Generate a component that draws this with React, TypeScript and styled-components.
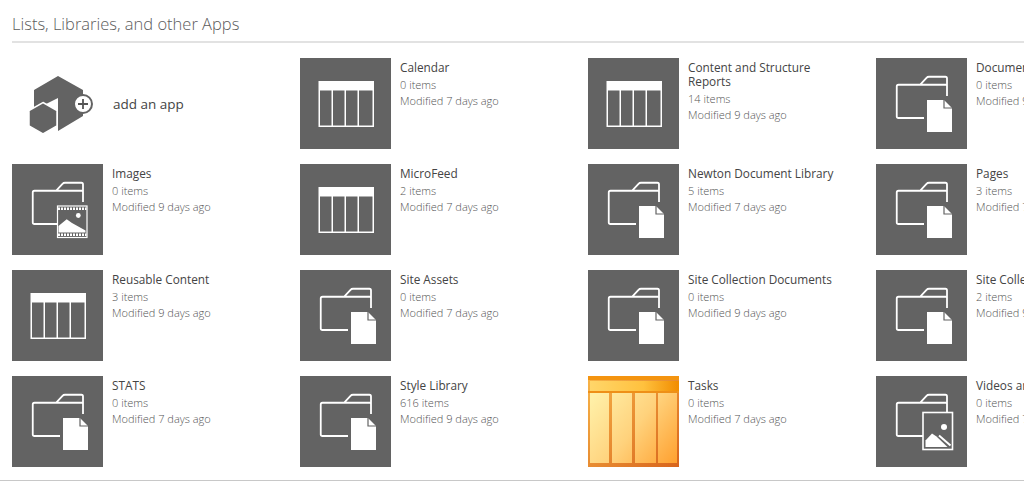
import React from 'react';
import styled, { createGlobalStyle } from 'styled-components';

type IconKind = 'table' | 'doc' | 'film' | 'picture' | 'tasks';

type AppItem = {
  name: string;
  count: number;
  days: number;
  icon: IconKind;
};

const APPS: AppItem[] = [
  { name: 'Calendar', count: 0, days: 7, icon: 'table' },
  { name: 'Content and Structure Reports', count: 14, days: 9, icon: 'table' },
  { name: 'Documents', count: 0, days: 9, icon: 'doc' },
  { name: 'Images', count: 0, days: 9, icon: 'film' },
  { name: 'MicroFeed', count: 2, days: 7, icon: 'table' },
  { name: 'Newton Document Library', count: 5, days: 7, icon: 'doc' },
  { name: 'Pages', count: 3, days: 7, icon: 'doc' },
  { name: 'Reusable Content', count: 3, days: 9, icon: 'table' },
  { name: 'Site Assets', count: 0, days: 7, icon: 'doc' },
  { name: 'Site Collection Documents', count: 0, days: 9, icon: 'doc' },
  { name: 'Site Collection Images', count: 2, days: 9, icon: 'doc' },
  { name: 'STATS', count: 0, days: 7, icon: 'doc' },
  { name: 'Style Library', count: 616, days: 9, icon: 'doc' },
  { name: 'Tasks', count: 0, days: 7, icon: 'tasks' },
  { name: 'Videos and Audio', count: 0, days: 7, icon: 'picture' },
];

const GlobalStyle = createGlobalStyle`
  html, body {
    margin: 0;
    padding: 0;
    background: #fff;
    overflow: hidden;
  }
`;

const Page = styled.div`
  width: 1024px;
  height: 481px;
  box-sizing: border-box;
  overflow: hidden;
  border-bottom: 1px solid #c8c8c8;
  font-family: "Open Sans", "Liberation Sans", sans-serif;
`;

const Heading = styled.h2`
  margin: 0 0 0 12px;
  height: 43px;
  box-sizing: border-box;
  padding-top: 13px;
  font-size: 16.5px;
  line-height: 22px;
  font-weight: 300;
  color: #5c5c5c;
  border-bottom: 2px solid #e2e2e2;
`;

const Grid = styled.div`
  display: grid;
  grid-template-columns: repeat(4, 273px);
  column-gap: 15px;
  row-gap: 15px;
  width: 1152px;
  padding: 15px 0 0 12px;
`;

const Card = styled.div`
  display: flex;
  gap: 9px;
  height: 91px;
`;

const Tile = styled.div<{ $plain?: boolean }>`
  flex: 0 0 91px;
  height: 91px;
  background: ${({ $plain }) => ($plain ? 'transparent' : '#636363')};

  svg {
    display: block;
  }
`;

const Info = styled.div`
  width: 160px;
  padding-top: 2px;
`;

const Name = styled.div`
  font-size: 11.8px;
  line-height: 14px;
  color: #444;
  margin-bottom: 3px;
`;

const Meta = styled.div`
  font-size: 11px;
  line-height: 16px;
  font-weight: 300;
  color: #555;
  white-space: nowrap;
`;

const AddLabel = styled.div`
  align-self: center;
  font-size: 13.5px;
  line-height: 18px;
  color: #444;
  margin: 1px 0 0 1px;
`;

const FolderShape = () => (
  <path
    d="M48 60H22.5Q20.75 60 20.75 58.5V28.5Q20.75 26.75 22.5 26.75H44L50.5 19.8Q51.5 18.75 53 18.75H69.5Q71 18.75 71 20.5V38M44 26.75H71"
    fill="none"
    stroke="#fff"
    strokeWidth="1.8"
  />
);

const TableIcon = () => (
  <svg width="91" height="91" viewBox="0 0 91 91">
    <rect x="18.5" y="23" width="55.5" height="46" fill="#fff" />
    <rect x="20" y="32.5" width="11.5" height="35" fill="#636363" />
    <rect x="33" y="32.5" width="11.5" height="35" fill="#636363" />
    <rect x="46" y="32.5" width="11.5" height="35" fill="#636363" />
    <rect x="59" y="32.5" width="13.5" height="35" fill="#636363" />
  </svg>
);

const DocIcon = () => (
  <svg width="91" height="91" viewBox="0 0 91 91">
    <FolderShape />
    <path d="M51 42H68L76 50V74H51Z" fill="#fff" />
    <path d="M68 41V50H77" fill="none" stroke="#636363" strokeWidth="1.2" />
  </svg>
);

const PictureIcon = () => (
  <svg width="91" height="91" viewBox="0 0 91 91">
    <FolderShape />
    <rect x="47" y="36.5" width="29.5" height="37" fill="#636363" stroke="#fff" strokeWidth="1.6" />
    <circle cx="68" cy="51" r="3" fill="#fff" />
    <path d="M49.5 71V64.5L56 57.5L60.5 60.5L71.5 71Z" fill="#fff" />
    <path d="M63 59.5L74.5 69.5" fill="none" stroke="#fff" strokeWidth="2" />
  </svg>
);

const FilmIcon = () => (
  <svg width="91" height="91" viewBox="0 0 91 91">
    <FolderShape />
    <rect x="45.5" y="42" width="29.5" height="31.5" fill="#636363" stroke="#fff" strokeWidth="1.2" />
    <path d="M46 44.8H74.5M46 70.8H74.5" stroke="#fff" strokeWidth="2.6" strokeDasharray="2 1" fill="none" />
    <circle cx="66.3" cy="51.5" r="2.4" fill="#fff" />
    <path d="M46.5 68.5V62L54.7 55.3L60 59L73.5 66.5V68.5Z" fill="#fff" />
  </svg>
);

const TasksIcon = () => (
  <svg width="91" height="91" viewBox="0 0 91 91">
    <defs>
      <linearGradient id="tasksBg" x1="0" y1="0" x2="1" y2="1">
        <stop offset="0" stopColor="#f8b548" />
        <stop offset="1" stopColor="#d8641c" />
      </linearGradient>
      <linearGradient id="tasksCell" gradientUnits="userSpaceOnUse" x1="5" y1="20" x2="88" y2="85">
        <stop offset="0" stopColor="#fff0a8" />
        <stop offset="0.5" stopColor="#ffd27c" />
        <stop offset="1" stopColor="#ffa232" />
      </linearGradient>
      <linearGradient id="tasksHead" x1="0" y1="0" x2="1" y2="0">
        <stop offset="0" stopColor="#ffd66a" />
        <stop offset="0.6" stopColor="#ffc13e" />
        <stop offset="1" stopColor="#f18c00" />
      </linearGradient>
    </defs>
    <rect width="91" height="91" fill="url(#tasksBg)" />
    <rect width="91" height="4" fill="#f49410" />
    <rect x="2" y="5" width="89" height="10" fill="url(#tasksHead)" />
    <rect y="15" width="91" height="2" fill="#ee9018" />
    <rect x="2" y="17" width="19" height="70" fill="url(#tasksCell)" />
    <rect x="24" y="17" width="20" height="70" fill="url(#tasksCell)" />
    <rect x="47" y="17" width="21" height="70" fill="url(#tasksCell)" />
    <rect x="70" y="17" width="19" height="70" fill="url(#tasksCell)" />
  </svg>
);

const AddAppIcon = () => (
  <svg width="91" height="91" viewBox="0 0 91 91">
    <path d="M46 18L71 32V58L46 73V40L22 52V32Z" fill="#636363" />
    <path d="M31 44.5L45 52.5V68L31 76L17 68V52.5Z" fill="#636363" stroke="#fff" strokeWidth="1.5" />
    <circle cx="71" cy="46" r="9" fill="#fff" stroke="#636363" strokeWidth="2" />
    <path d="M66 46H76M71 41V51" stroke="#555" strokeWidth="1.8" fill="none" />
  </svg>
);

const ICONS: Record<IconKind, React.FC> = {
  table: TableIcon,
  doc: DocIcon,
  film: FilmIcon,
  picture: PictureIcon,
  tasks: TasksIcon,
};

function App() {
  return (
    <Page>
      <GlobalStyle />
      <Heading>Lists, Libraries, and other Apps</Heading>
      <Grid>
        <Card>
          <Tile $plain>
            <AddAppIcon />
          </Tile>
          <AddLabel>add an app</AddLabel>
        </Card>
        {APPS.map((app) => {
          const Icon = ICONS[app.icon];
          return (
            <Card key={app.name}>
              <Tile $plain={app.icon === 'tasks'}>
                <Icon />
              </Tile>
              <Info>
                <Name>{app.name}</Name>
                <Meta>{app.count} items</Meta>
                <Meta>Modified {app.days} days ago</Meta>
              </Info>
            </Card>
          );
        })}
      </Grid>
    </Page>
  );
}

export default App;
